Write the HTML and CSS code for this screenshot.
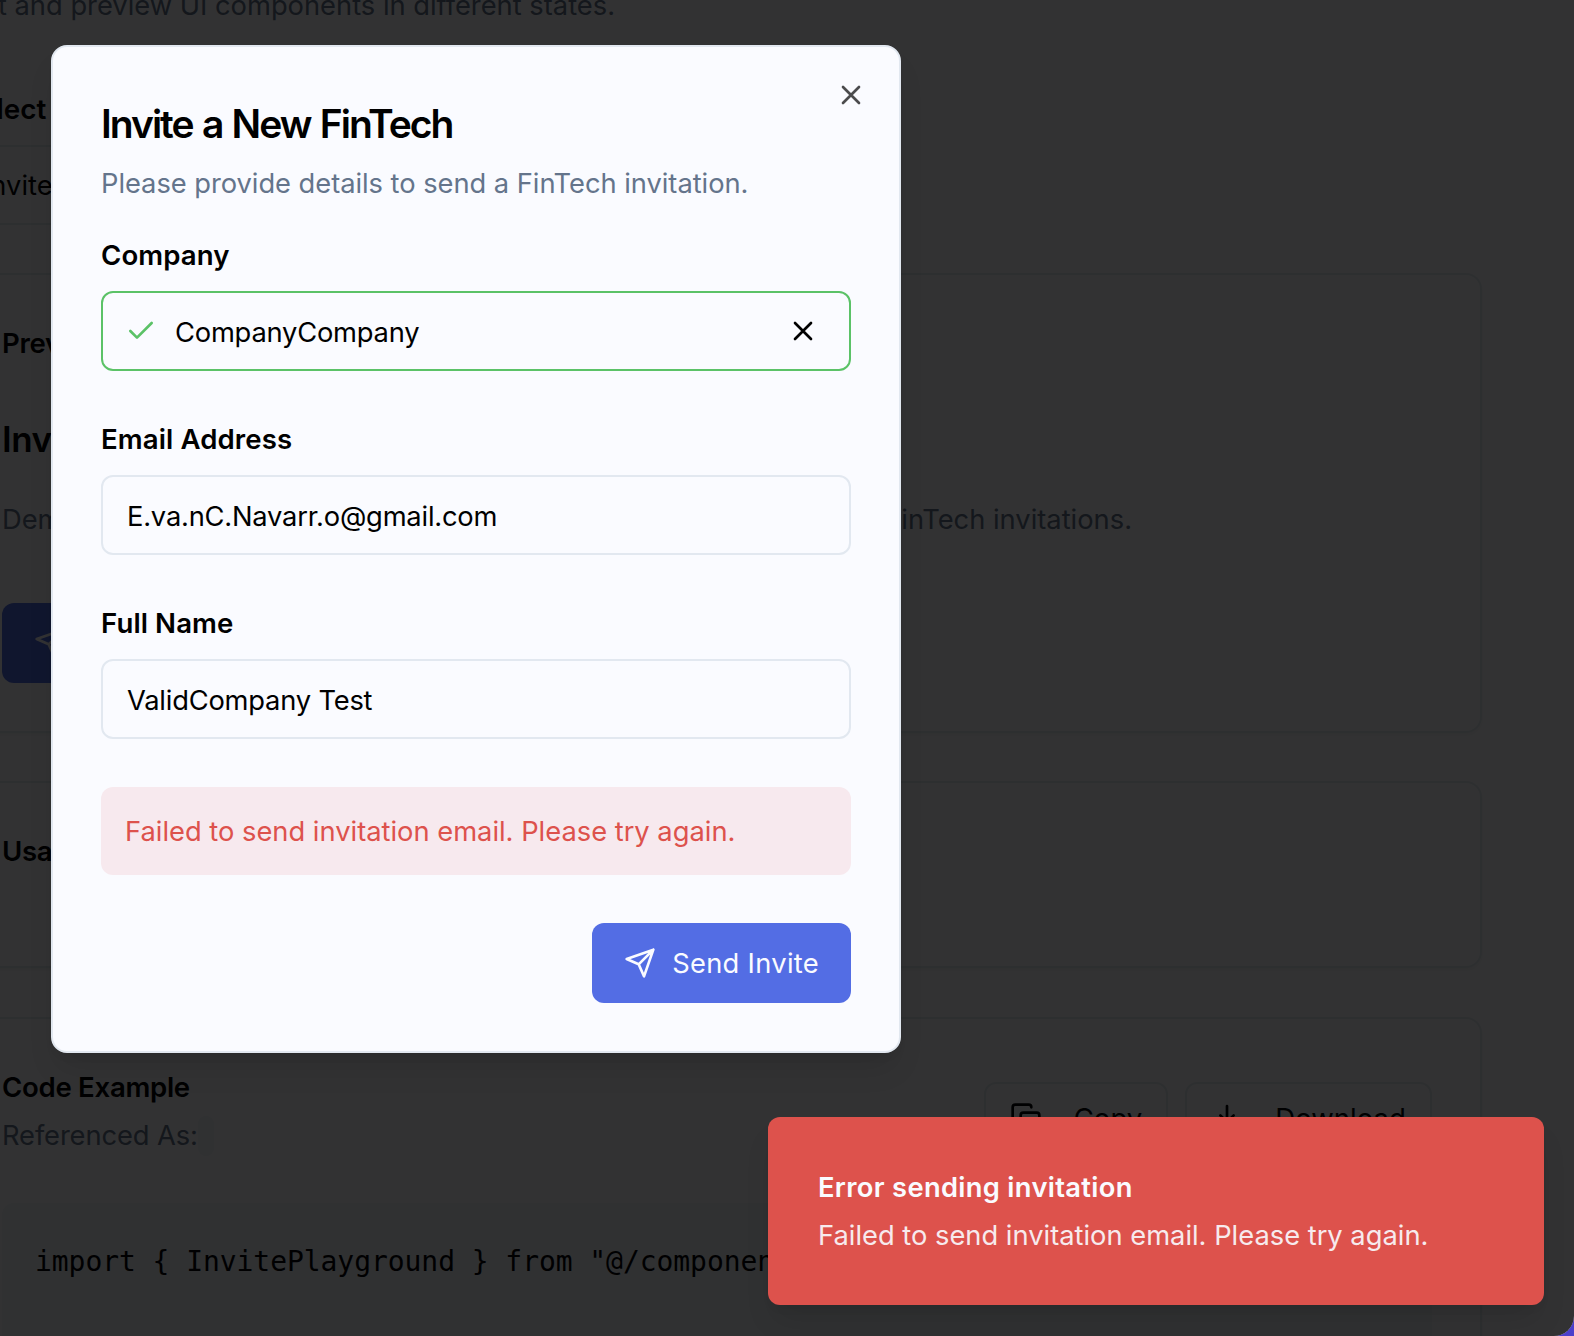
FILE: index.html
```html
<!DOCTYPE html>
<html lang="en">
<head>
<meta charset="utf-8">
<title>Component Playground</title>
<link rel="stylesheet" href="styles.css">
</head>
<body>
<div class="window">
  <main class="page">
    <p class="intro"><span>Select and preview UI components in different states.</span></p>
    <h2 class="picker-label">Select</h2>
    <div class="picker">Invite</div>
    <section class="card card-preview">
      <h3 class="card-title">Preview</h3>
      <h2 class="demo-title">Invite</h2>
      <p class="muted demo-text"><span>Demo</span><span>FinTech invitations.</span></p>
      <button class="btn demo-btn"><svg class="icon" viewBox="0 0 24 24"><path d="m22 2-7 20-4-9-9-4ZM22 2 11 13"/></svg></button>
    </section>
    <section class="card card-usage"><h3 class="card-title">Usage</h3></section>
    <section class="card card-code">
      <header class="code-head">
        <div class="code-heading">
          <h3 class="card-title">Code Example</h3>
          <p class="muted">Referenced As:<code class="chip"></code></p>
        </div>
        <div class="actions">
          <button class="btn-outline"><svg class="icon" viewBox="0 0 24 24"><rect x="8" y="8" width="14" height="14" rx="2"/><path d="M4 16c-1.1 0-2-.9-2-2V4c0-1.1.9-2 2-2h10c1.1 0 2 .9 2 2"/></svg>Copy</button>
          <button class="btn-outline"><svg class="icon" viewBox="0 0 24 24"><path d="M12 3v12M7 10l5 5 5-5M3 15v4a2 2 0 0 0 2 2h14a2 2 0 0 0 2-2v-4"/></svg>Download</button>
        </div>
      </header>
      <pre class="code">import { InvitePlayground } from "@/components"</pre>
    </section>
  </main>
  <div class="overlay"></div>

  <div class="dialog" role="dialog">
    <svg class="icon dialog-close" viewBox="0 0 24 24"><path d="M18 6 6 18M6 6l12 12"/></svg>
    <h1 class="dialog-title">Invite a New FinTech</h1>
    <p class="dialog-desc">Please provide details to send a FinTech invitation.</p>
    <div class="fields">
      <div class="field">
        <label>Company</label>
        <div class="input input-valid">
          <svg class="icon icon-check" viewBox="0 0 24 24"><path d="M20 6 9 17l-5-5"/></svg>
          <span class="value">CompanyCompany</span>
          <svg class="icon icon-clear" viewBox="0 0 24 24"><path d="M18 6 6 18M6 6l12 12"/></svg>
        </div>
      </div>
      <div class="field"><label>Email Address</label><div class="input"><span class="value">E.va.nC.Navarr.o@gmail.com</span></div></div>
      <div class="field"><label>Full Name</label><div class="input"><span class="value">ValidCompany Test</span></div></div>
      <div class="alert">Failed to send invitation email. Please try again.</div>
      <button class="btn submit"><svg class="icon" viewBox="0 0 24 24"><path d="m22 2-7 20-4-9-9-4ZM22 2 11 13"/></svg><span>Send Invite</span></button>
    </div>
  </div>

  <div class="toast" role="alert">
    <strong>Error sending invitation</strong>
    <span>Failed to send invitation email. Please try again.</span>
  </div>
</div>
</body>
</html>
```
FILE: styles.css
```css
* { box-sizing: border-box; margin: 0; }
body { background: #4c3fcb; font: 400 27.3px/40px Inter, sans-serif; color: #020205; overflow: hidden; }
button { font: inherit; letter-spacing: inherit; border: 0; }
.window { position: relative; width: 1574px; height: 1336px; overflow: hidden; border-bottom-right-radius: 20px; background: #fafbff; }
.page { margin-left: -48px; width: 1530px; }
.intro, .muted { color: #64748b; }
.intro { margin-top: -14px; width: 663px; display: flex; justify-content: flex-end; white-space: nowrap; }
.picker-label { margin-top: 63px; padding-left: 10px; font-size: 27.8px; font-weight: 600; }
.picker { margin-top: 16px; height: 80px; width: 900px; border: 2px solid #e2e8f0; padding: 19px 29px 17px; }
.card { width: 1530px; border: 2px solid #e2e8f0; border-radius: 16px; padding: 48px; box-shadow: 0 2px 4px rgba(0,0,0,.05); }
.card-title { font-size: 27.6px; font-weight: 600; letter-spacing: -0.3px; }
.card-preview { margin-top: 48px; height: 460px; }
.card-usage { margin-top: 48px; height: 187px; }
.card-code { margin-top: 49px; height: 500px; }
.demo-title { margin-top: 48px; font-size: 35px; font-weight: 600; line-height: 56px; letter-spacing: -0.5px; }
.demo-text { margin-top: 33px; width: 1130px; display: flex; justify-content: space-between; }
.demo-btn { margin-top: 63px; }
.code-head { display: flex; justify-content: space-between; align-items: flex-start; }
.code-heading { display: flex; flex-direction: column; gap: 9px; }
.code-heading .muted { letter-spacing: -0.1px; }
.actions { display: flex; gap: 17px; margin-top: 15px; }
.btn-outline { display: flex; align-items: center; gap: 32px; height: 72px; padding: 0 24px; border: 2px solid #e2e8f0; border-radius: 12px; background: none; color: inherit; font-size: 27.6px; }
.chip { display: inline-block; vertical-align: top; width: 16px; height: 40px; border-radius: 8px; background: #edf2f9; }
.code { margin-top: 47px; height: 300px; padding: 39px 33px; border-radius: 12px; background: #edf2f9; font: 28px/40px "DejaVu Sans Mono", monospace; letter-spacing: -0.06px; }
.icon { width: 32px; height: 32px; flex: none; fill: none; stroke: currentColor; stroke-width: 2; stroke-linecap: round; stroke-linejoin: round; }
.btn { display: flex; align-items: center; gap: 16px; height: 80px; padding: 0 32px; border-radius: 12px; background: #536de4; color: #fafbff; }

.overlay { position: absolute; inset: 0; background: rgba(0,0,0,.8); }

.dialog { position: absolute; left: 51px; top: 45px; width: 850px; height: 1008px; padding: 47px 48px 48px; border: 2px solid #e2e8f0; border-radius: 16px; background: #fafbff; box-shadow: 0 20px 30px -6px rgba(0,0,0,.1), 0 8px 12px -8px rgba(0,0,0,.1); color: #000; }
.dialog-close { position: absolute; right: 32px; top: 32px; color: #4b4b4d; }
.dialog-title { font-size: 39px; font-weight: 600; line-height: 60px; letter-spacing: -2px; word-spacing: 1.5px; }
.dialog-desc { margin-top: 10px; color: #64748b; letter-spacing: -0.04px; }
.fields { margin-top: 31px; display: flex; flex-direction: column; gap: 48px; }
.field { display: flex; flex-direction: column; gap: 16px; }
label { font-size: 27.6px; font-weight: 600; letter-spacing: 0.1px; }
.input { display: flex; align-items: center; height: 80px; padding: 0 24px; border: 2px solid #e2e8f0; border-radius: 12px; }
.input-valid { border-color: #5bc267; }
.value { flex: 1; padding-top: 3px; letter-spacing: -0.2px; }
.icon-check { color: #5bc267; margin: 0 18px 0 -2px; }
.icon-clear { margin-right: 6px; }
.alert { padding: 25px 24px 23px; border-radius: 12px; background: #f7e9ee; color: #dd524c; }
.submit { align-self: flex-end; letter-spacing: 0.3px; }
.submit span { padding-top: 2px; }

.toast { position: absolute; left: 768px; top: 1117px; width: 776px; height: 188px; padding: 51px 50px 49px; border-radius: 12px; background: #dd524c; color: #fafbff; display: flex; flex-direction: column; gap: 8px; box-shadow: 0 20px 30px -6px rgba(0,0,0,.1), 0 8px 12px -8px rgba(0,0,0,.1); }
.toast strong { font-weight: 600; letter-spacing: 0.32px; }
.toast span { opacity: .9; }
```
